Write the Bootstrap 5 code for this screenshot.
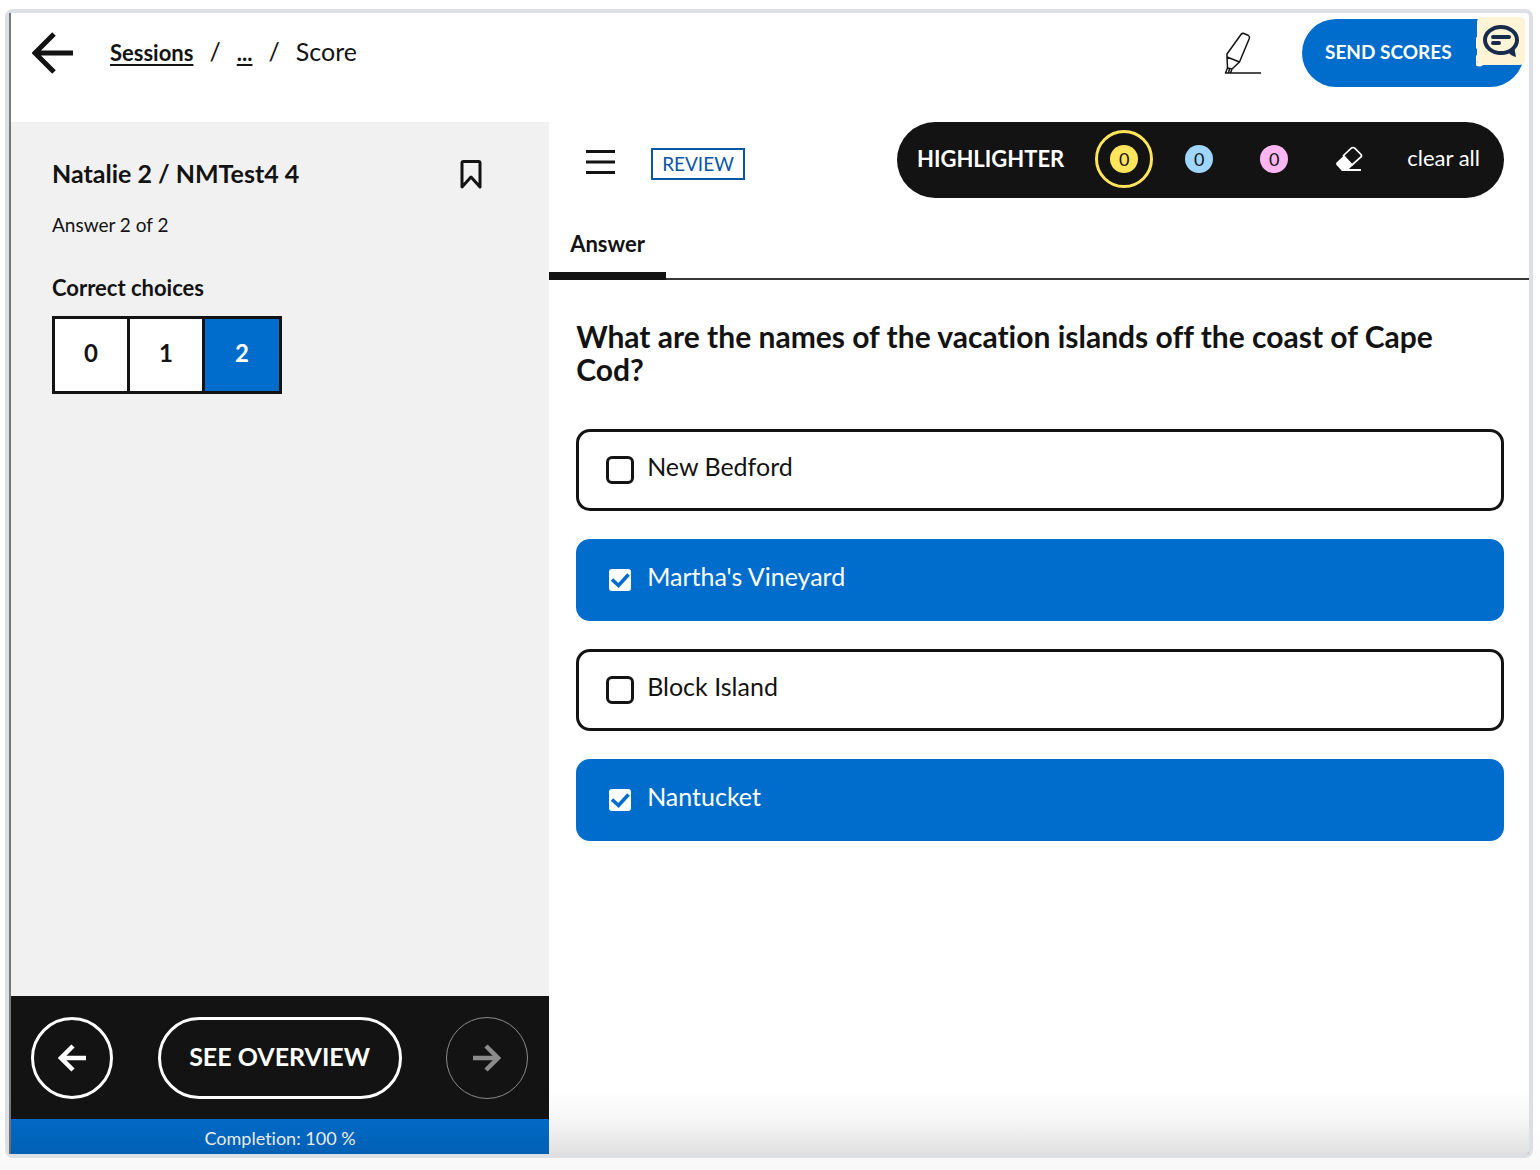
<!DOCTYPE html>
<html lang="en">
<head>
<meta charset="utf-8">
<meta name="viewport" content="width=device-width, initial-scale=1">
<title>Score</title>
<link href="https://cdn.jsdelivr.net/npm/bootstrap@5.3.0/dist/css/bootstrap.min.css" rel="stylesheet">
<style>
  :root { --ink: #131313; --brand: #006dcc; }
  body { font-family: Lato, "Open Sans", sans-serif; font-variant-ligatures: none; color: var(--ink); background: linear-gradient(#fff 96%, #f8f8f8); padding: 9px 7px 12px 5px; min-height: 100vh; }
  .app-frame { min-height: calc(100vh - 21px); border: 4px solid #dce0e5; border-radius: 8px; background: #fff; }
  .app-body { border-left: 2px solid #77787b; }
  .bottom-fade { left: 0; right: 0; bottom: 0; height: 64px; background: linear-gradient(rgba(0,0,0,0), rgba(0,0,0,.04) 50%, rgba(0,0,0,.12)); pointer-events: none; }
  .app-header { height: 109px; padding: 6px 5px 0 21px; }
  .icon-btn { border: 0; background: none; padding: 0; line-height: 0; color: inherit; }
  .crumbs { --bs-breadcrumb-divider: "/"; --bs-breadcrumb-item-padding-x: 16px; --bs-breadcrumb-divider-color: var(--ink); font-size: 25px; line-height: 32px; padding-bottom: 3px; }
  .crumbs a { color: inherit; font-weight: 700; font-size: 22px; text-underline-offset: 3px; }
  .send-btn { height: 68px; width: 222px; padding: 0 0 2px 23px; font-size: 19px; font-weight: 700; }
  .send-btn, .send-btn:hover { background: var(--brand); color: #fff; border: 0; }
  .chat-btn { width: 48px; height: 48px; right: 4px; top: 4px; background: #fff4d6; border: 0; border-radius: 5px; padding: 0; z-index: 3; }
  .side-pane { flex: 0 0 35.45%; background: #f1f1f1; }
  .side-info { padding: 34px 66px 0 41px; }
  .student-name { font-size: 25px; line-height: 34px; font-weight: 700; padding-bottom: 2px; }
  .answer-count { font-size: 19px; line-height: 26px; margin-top: 20px; }
  .score-title { font-size: 22px; line-height: 28px; font-weight: 700; margin: 36px 0 14px; }
  .score-box { border: 3px solid var(--ink); }
  .score-box .score-opt { width: 75px; height: 72px; font-size: 24px; font-weight: 700; border: 0; border-right: 3px solid var(--ink); border-radius: 0; background: #fff; color: var(--ink); display: flex; align-items: center; justify-content: center; padding: 0 0 4px; }
  .score-box .score-opt:last-child { border-right: 0; width: 74px; }
  .score-box .btn-check:checked + .score-opt { background: var(--brand); color: #fff; border-color: var(--ink); }
  .pager { background: var(--ink); height: 123px; padding: 0 21px 0 20px; }
  .pager-btn { height: 82px; min-width: 82px; border: 3px solid #fff; border-radius: 41px; background: none; color: #fff; font-size: 25px; font-weight: 700; padding: 0; }
  .pager-btn svg { display: block; margin: auto; }
  .pager-main { width: 244px; padding-bottom: 2px; }
  .pager-btn:disabled { color: #8b8b8b; border: 1px solid #8b8b8b; }
  .completion { height: 35px; line-height: 39px; background: var(--brand); color: #fff; font-size: 18px; }
  .tool-row { padding: 0 25px 0 37px; height: 76px; }
  .review-tag { border: 2px solid #0b56a4; color: #0b56a4; font-size: 19px; line-height: 28px; padding: 0 9px; margin: 4px 0 0 36px; }
  .hl-bar { height: 76px; background: var(--ink); color: #fff; padding: 0 24px 2px 20px; }
  .hl-name { font-size: 22px; font-weight: 700; margin-right: 31px; padding-bottom: 2px; }
  .hl-set { gap: 17px; }
  .hl-btn { width: 58px; height: 58px; border: 3px solid transparent; border-radius: 50%; background: none; padding: 0; color: #fff; }
  .hl-dot { width: 28px; height: 28px; font-size: 18px; line-height: 28px; color: var(--ink); border-radius: 50%; display: block; margin: auto; }
  .hl-yellow { background: #ffe45c; } .hl-blue { background: #9fd6ff; } .hl-pink { background: #fdb6f2; }
  .hl-btn.picked { border-color: #ffe45c; }
  .clear-btn { font-size: 22px; border: 0; background: none; color: #fff; padding: 0 0 3px; margin-left: 29px; }
  .answer-tabs { --bs-nav-tabs-border-width: 0; border-bottom: 2px solid #3a3838; margin-top: 24px; }
  .answer-tabs .nav-link, .answer-tabs .nav-link.active { color: var(--ink); background: none; border: 0; border-bottom: 8px solid var(--ink); border-radius: 0; font-size: 22px; font-weight: 700; line-height: 30px; padding: 7px 21px 13px; margin-bottom: -2px; }
  .question-area { padding: 40px 25px 0 27px; }
  .question-text { font-size: 30px; line-height: 33px; font-weight: 700; margin-bottom: 43px; padding-right: 16px; }
  .option-list { gap: 28px; }
  .option-card { height: 82px; border: 3px solid var(--ink); border-radius: 14px; padding: 0 27px; cursor: pointer; font-size: 25px; }
  .option-card .form-check-input { width: 28px; height: 28px; border: 3px solid var(--ink); border-radius: 6px; margin: 0 13px 0 0; background-color: #fff; }
  .option-card.chosen { background: var(--brand); border-color: var(--brand); color: #fff; }
  .option-card .form-check-input:checked { border-color: var(--brand); background-image: url("data:image/svg+xml,%3Csvg xmlns='http://www.w3.org/2000/svg' viewBox='0 0 22 22'%3E%3Cpath d='M3 10.500l6.500 6L19.500 5.500' fill='none' stroke='%23006dcc' stroke-width='3.600'/%3E%3C/svg%3E"); }
  .option-text { padding-bottom: 7px; }
</style>
<script src="https://cdn.jsdelivr.net/npm/bootstrap@5.3.0/dist/js/bootstrap.bundle.min.js"></script>
</head>
<body>
<div class="app-frame d-flex position-relative">
  <div class="app-body d-flex flex-column flex-grow-1">
    <header class="app-header d-flex align-items-start">
      <div class="d-flex align-items-center w-100">
        <button class="icon-btn" aria-label="Back">
          <svg width="42" height="42" viewBox="0 0 42 42" fill="none" stroke="currentColor" stroke-width="5"><path d="M22 2L3 21l19 19M3 21h38"/></svg>
        </button>
        <nav aria-label="breadcrumb" class="ms-4 ps-2">
          <ol class="breadcrumb crumbs mb-0 ps-1">
            <li class="breadcrumb-item"><a href="#">Sessions</a></li>
            <li class="breadcrumb-item"><a href="#">...</a></li>
            <li class="breadcrumb-item">Score</li>
          </ol>
        </nav>
        <button class="icon-btn ms-auto me-4" aria-label="Highlighter tool">
          <svg width="38" height="42" viewBox="0 0 38 42" fill="none" stroke="#131313" stroke-width="1.5" stroke-linejoin="round"><path d="M17 2.500Q18 1 20 1.500L24.500 3.500Q26 4.500 25.300 6.500L15.500 30 3 25V22zM3 25L3.500 36 8 37 15.500 30M3.500 36L1.500 41H6.500L8 37M5.500 36.500L4.500 41M1.500 41H37"/></svg>
        </button>
        <button class="btn rounded-pill send-btn d-flex align-items-center ms-3">SEND SCORES
          <svg class="ms-4" width="34" height="34" viewBox="0 0 34 34" fill="none" stroke="#fff" stroke-width="3"><path d="M3 2Q-4 8 3 14M3 19Q-4 30 4 30L31 17z"/></svg>
        </button>
      </div>
    </header>

    <div class="d-flex flex-grow-1">
      <aside class="side-pane d-flex flex-column">
        <div class="side-info">
          <div class="d-flex justify-content-between align-items-center">
            <h1 class="student-name mb-0">Natalie 2 / NMTest4 4</h1>
            <button class="icon-btn" aria-label="Bookmark">
              <svg width="24" height="30" viewBox="0 0 24 30" fill="none" stroke="currentColor" stroke-width="3" stroke-linejoin="round"><path d="M3 28V4Q3 2.500 4.500 2.500H19.500Q21 2.500 21 4V28L12 18z"/></svg>
            </button>
          </div>
          <p class="answer-count mb-0">Answer 2 of 2</p>
          <h2 class="score-title">Correct choices</h2>
          <div class="score-box d-inline-flex" role="group" aria-label="Correct choices">
            <input class="btn-check" type="radio" name="score" id="s0"><label class="score-opt" for="s0">0</label>
            <input class="btn-check" type="radio" name="score" id="s1"><label class="score-opt" for="s1">1</label>
            <input class="btn-check" type="radio" name="score" id="s2" checked><label class="score-opt" for="s2">2</label>
          </div>
        </div>
        <div class="pager d-flex align-items-center justify-content-between mt-auto">
          <button class="pager-btn" aria-label="Previous"><svg width="28" height="28" viewBox="0 0 28 28" fill="none" stroke="currentColor" stroke-width="4.500"><path d="M15 2L3 14l12 12M3 14h25"/></svg></button>
          <button class="pager-btn pager-main">SEE OVERVIEW</button>
          <button class="pager-btn" aria-label="Next" disabled><svg width="28" height="28" viewBox="0 0 28 28" fill="none" stroke="currentColor" stroke-width="4.500"><path d="M13 2l12 12-12 12M25 14H0"/></svg></button>
        </div>
        <div class="completion text-center">Completion: 100 %</div>
      </aside>

      <main class="flex-grow-1">
        <div class="tool-row d-flex align-items-center">
          <div class="d-flex align-items-center pt-1">
            <button class="icon-btn" aria-label="Menu"><svg width="29" height="26" viewBox="0 0 29 26" fill="none" stroke="currentColor" stroke-width="3"><path d="M0 2.500h29M0 13h29M0 23.500h29"/></svg></button>
            <span class="review-tag">REVIEW</span>
          </div>
          <div class="hl-bar rounded-pill d-flex align-items-center ms-auto">
            <span class="hl-name">HIGHLIGHTER</span>
            <div class="hl-set d-flex">
              <button class="hl-btn picked" aria-label="Yellow"><span class="hl-dot hl-yellow">0</span></button>
              <button class="hl-btn" aria-label="Blue"><span class="hl-dot hl-blue">0</span></button>
              <button class="hl-btn" aria-label="Pink"><span class="hl-dot hl-pink">0</span></button>
              <button class="hl-btn" aria-label="Eraser"><svg width="28" height="28" viewBox="0 0 28 28"><path d="M8.500 10.500L16.500 3Q18 2 19.500 3L26 9.500Q27 11 26 12L17 20z" fill="none" stroke="#fff" stroke-width="1.700"/><path d="M9 10.500L1.500 17.500Q.5 18.500 1.500 20L7 26H26V24H14L18 20z" fill="#fff"/></svg></button>
            </div>
            <button class="clear-btn">clear all</button>
          </div>
        </div>
        <ul class="nav nav-tabs answer-tabs">
          <li class="nav-item"><a class="nav-link active" href="#" aria-current="page">Answer</a></li>
        </ul>
        <section class="question-area">
          <h2 class="question-text">What are the names of the vacation islands off the coast of Cape Cod?</h2>
          <div class="option-list d-flex flex-column">
            <label class="option-card d-flex align-items-center"><input class="form-check-input" type="checkbox"><span class="option-text">New Bedford</span></label>
            <label class="option-card chosen d-flex align-items-center"><input class="form-check-input" type="checkbox" checked><span class="option-text">Martha's Vineyard</span></label>
            <label class="option-card d-flex align-items-center"><input class="form-check-input" type="checkbox"><span class="option-text">Block Island</span></label>
            <label class="option-card chosen d-flex align-items-center"><input class="form-check-input" type="checkbox" checked><span class="option-text">Nantucket</span></label>
          </div>
        </section>
      </main>
    </div>
  </div>
  <div class="bottom-fade position-absolute"></div>
  <button class="chat-btn position-absolute" aria-label="Comments">
    <svg width="48" height="48" viewBox="0 0 48 48" fill="none" stroke="#172b4d" stroke-width="4"><ellipse cx="24" cy="23" rx="16" ry="13"/><path d="M16 20H32M16 26H22" stroke-linecap="round"/><path d="M32 34L37 29 39 40Q34 39 31 35z" fill="#172b4d" stroke="none"/></svg>
  </button>
</div>
</body>
</html>
